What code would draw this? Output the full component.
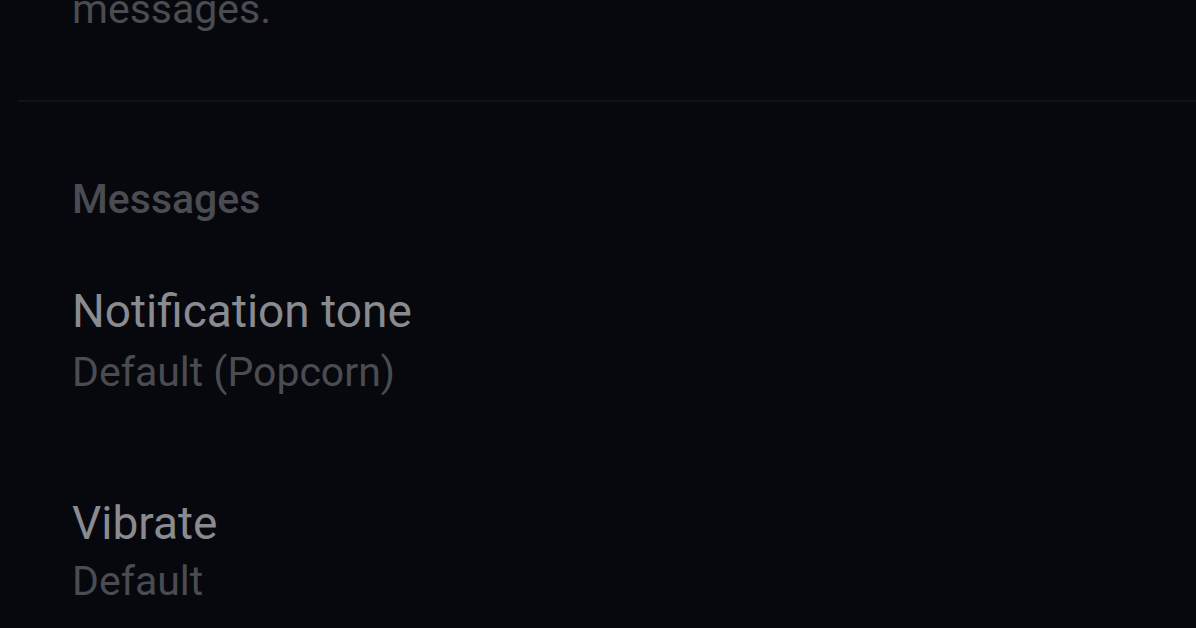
export default function App() {
  return (
    <div className="w-[1196px] h-[628px] overflow-hidden bg-[#06080d]" style={{ fontFamily: 'Roboto, "Noto Sans", sans-serif' }}>
      <div className="pl-[72px]">
        <p className="-mt-[11px] h-[41px] text-[41px] leading-none text-[#4a4c51]">messages.</p>
      </div>
      <div className="mt-[70px] ml-[18px] h-[2px] bg-[#0f1218]" />
      <div className="pl-[72px]">
        <p className="mt-[77px] text-[41px] leading-none font-medium text-[#4a4c51]">Messages</p>
        <div className="mt-[68px]">
          <p className="text-[46px] leading-none text-[#898b90]">Notification tone</p>
          <p className="mt-[18px] text-[41px] leading-none text-[#4a4c51]">Default (Popcorn)</p>
        </div>
        <div className="mt-[107px]">
          <p className="text-[46px] leading-none text-[#898b90]">Vibrate</p>
          <p className="mt-[15px] text-[41px] leading-none text-[#4a4c51]">Default</p>
        </div>
      </div>
    </div>
  );
}
